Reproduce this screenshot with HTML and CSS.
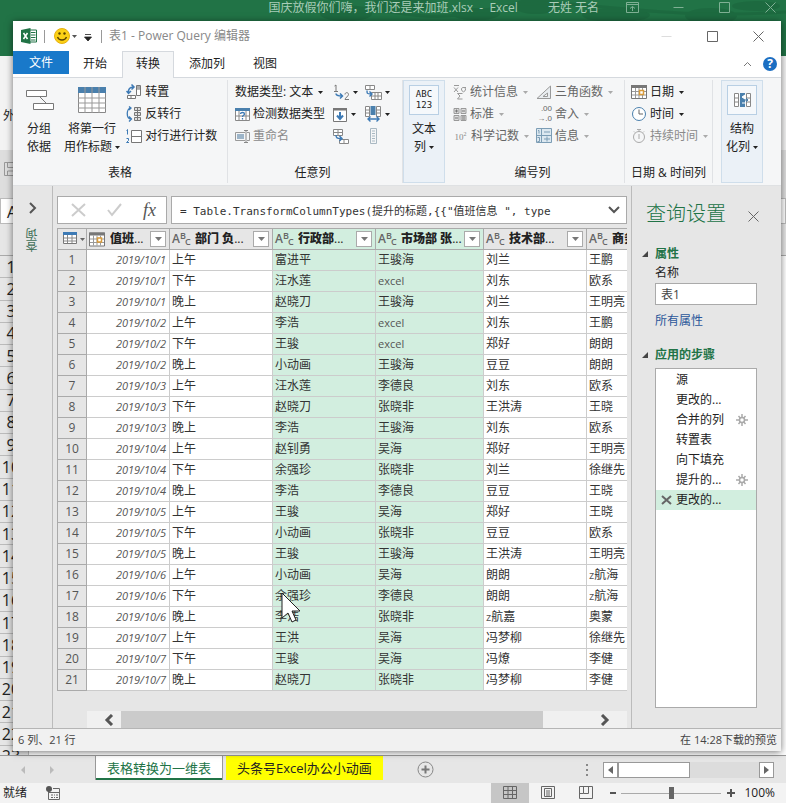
FILE: index.html
```html
<!DOCTYPE html>
<html lang="zh-CN">
<head>
<meta charset="utf-8">
<meta name="viewport" content="width=device-width, initial-scale=1">
<title>表1 - Power Query 编辑器</title>
<link rel="stylesheet" href="styles.css">
</head>
<body>
<svg class="defs" aria-hidden="true">
  <symbol id="cal" viewBox="0 0 16 14"><path d="M.5.5h15v13H.5z" fill="#fff" stroke="#777"/><path d="M0 0h16v3H0z" fill="#777"/><path d="M1 6.500h14M1 10h14M4.500 3v10M8 3v10M11.500 3v10" stroke="#999" fill="none"/><path d="M8.500 5.500h4v4h-4z" fill="#fff" stroke="#d89a3a" stroke-width="1.500"/></symbol>
  <symbol id="grid" viewBox="0 0 16 14"><path d="M.5.5h13v11H.5z" fill="#fff" stroke="#777"/><path d="M0 0h14v3H0z" fill="#3d7ab5"/><path d="M1 6h12M1 9h12M4.500 3v8M9 3v8" stroke="#888" fill="none"/></symbol>
  <symbol id="down" viewBox="0 0 7 4"><path d="M0 0h7L3.500 4z" fill="currentColor"/></symbol>
  <symbol id="gear" viewBox="0 0 12 12"><path d="M6 0v12M0 6h12M2.500 2l7 8M9.500 2l-7 8" stroke="#aaa" stroke-width="1.500"/><circle cx="6" cy="6" r="2.500" fill="#fff" stroke="#aaa" stroke-width="1.500"/></symbol>
  <symbol id="close" viewBox="0 0 11 11"><path d="M.5.5l10 10M10.500.5l-10 10" stroke="currentColor" fill="none"/></symbol>
  <symbol id="max" viewBox="0 0 11 11"><path d="M.5.5h10v10H.5z" stroke="currentColor" fill="none"/></symbol>
  <symbol id="min" viewBox="0 0 11 11"><path d="M.5 5.500h10" stroke="currentColor" fill="none"/></symbol>
  <symbol id="chev" viewBox="0 0 12 8"><path d="M1 1l5 5 5-5" stroke="currentColor" stroke-width="2" fill="none"/></symbol>
</svg>

<div class="excel">
  <header class="excel-title">
    <svg class="leaves" viewBox="0 0 500 56" aria-hidden="true"><g fill="#1b633b"><ellipse cx="60" cy="14" rx="26" ry="7"/><ellipse cx="115" cy="4" rx="30" ry="9"/><ellipse cx="190" cy="14" rx="24" ry="6"/><ellipse cx="250" cy="6" rx="22" ry="8"/><ellipse cx="330" cy="15" rx="34" ry="7"/><ellipse cx="425" cy="16" rx="26" ry="8"/><ellipse cx="470" cy="6" rx="24" ry="5"/></g><path d="M0 10c80-16 120 20 200 0s140 12 300 2" stroke="#1b633b" stroke-width="3" fill="none"/></svg>
    <span class="excel-doc">国庆放假你们嗨，我们还是来加班.xlsx&nbsp; -&nbsp; Excel</span>
    <span class="excel-user">无姓 无名</span>
    <button class="win-btn" aria-label="功能区显示选项"><svg width="13" height="11" viewBox="0 0 13 11"><path d="M.5.5h12v10H.5zM1 2.500h11M6.500 9V4.500M4 6.500l2.500-2 2.500 2" stroke="currentColor" fill="none"/></svg></button>
    <button class="win-btn" aria-label="最小化"><svg width="11" height="11"><use href="#min"/></svg></button>
    <button class="win-btn" aria-label="最大化"><svg width="11" height="11"><use href="#max"/></svg></button>
    <button class="win-btn" aria-label="关闭"><svg width="11" height="11"><use href="#close"/></svg></button>
  </header>
  <div class="excel-ribbon">外</div>
  <div class="excel-quick"><svg width="14" height="14" viewBox="0 0 14 14"><path d="M.5.5h13v13H.5zM3.500.5v5h7v-5M3.500 13V9h7v4" stroke="#999" fill="none"/></svg></div>
  <div class="excel-name">A1</div>
  <div class="excel-colhead"></div>
  <ol class="excel-rows">
    <li>1</li><li>2</li><li>3</li><li>4</li><li>5</li><li>6</li><li>7</li><li>8</li><li>9</li><li>10</li><li>11</li><li>12</li><li>13</li><li>14</li><li>15</li><li>16</li><li>17</li><li>18</li><li>19</li><li>20</li><li>21</li><li>22</li><li>23</li>
  </ol>
  <nav class="sheets">
    <span class="sheet-nav"><svg width="36" height="8" viewBox="0 0 36 8"><path d="M5 0v8L1 4zM30 0v8l4-4z" fill="#bbb"/></svg></span>
    <a class="sheet active" href="#">表格转换为一维表</a>
    <a class="sheet yellow" href="#">头条号Excel办公小动画</a>
    <button class="sheet-add" aria-label="新工作表"><svg width="17" height="17" viewBox="0 0 17 17"><circle cx="8.500" cy="8.500" r="7.500" stroke="#888" fill="none"/><path d="M8.500 4.500v8M4.500 8.500h8" stroke="#777" stroke-width="2"/></svg></button>
    <svg class="dots" width="3" height="12" viewBox="0 0 3 12"><path d="M0 1h2M0 6h2M0 11h2" stroke="#888" stroke-width="2"/></svg>
    <div class="sheet-scroll">
      <button aria-label="向左滚动"><svg width="5" height="8"><path d="M5 0v8L0 4z" fill="#666"/></svg></button>
      <span class="thumb"></span><span class="track"></span>
      <button aria-label="向右滚动"><svg width="5" height="8"><path d="M0 0v8l5-4z" fill="#666"/></svg></button>
    </div>
  </nav>
  <footer class="excel-status">
    <span>就绪</span>
    <svg width="14" height="14" viewBox="0 0 14 14"><path d="M2.500 5v8.500h11v-11H7M3 6.500h10" stroke="#666" fill="none"/><path d="M5 9h2M8 9h1M10 9h2M5 11.500h2M8 11.500h1M10 11.500h2" stroke="#666"/><circle cx="3" cy="3" r="3" fill="#555"/></svg>
    <div class="views">
      <button class="on" aria-label="普通"><svg width="14" height="14" viewBox="0 0 14 14"><path d="M.5.5h13v12H.5zM.5 4.500h13M.5 8.500h13M5 .5v12M9.500.5v12" stroke="#666" fill="none"/></svg></button>
      <button aria-label="页面布局"><svg width="14" height="14" viewBox="0 0 14 14"><path d="M.5.5h13v12H.5zM3.500 2.500h7v8h-7zM5 5h4M5 7h4M5 9h4" stroke="#666" fill="none"/></svg></button>
      <button aria-label="分页预览"><svg width="14" height="14" viewBox="0 0 14 14"><path d="M.5.5h13v12H.5zM4.500.5v7h5v-7M.5 7.500h4" stroke="#666" fill="none"/></svg></button>
    </div>
    <button class="zoom-btn" aria-label="缩小"><svg width="8" height="8"><path d="M1 4h6" stroke="#555" stroke-width="2"/></svg></button>
    <input class="zoom" type="range" min="0" max="100" value="50" aria-label="缩放">
    <button class="zoom-btn" aria-label="放大"><svg width="8" height="8"><path d="M0 4h8M4 0v8" stroke="#555" stroke-width="2"/></svg></button>
    <span class="zoom-val">100%</span>
  </footer>
</div>

<main class="pq">
  <header class="pq-title">
    <svg width="16" height="16" viewBox="0 0 16 16"><path d="M8 2h7.500v12H8z" fill="#fff" stroke="#217346"/><path d="M10 4.500h4.500M10 7h4.500M10 9.500h4.500M10 12h4.500" stroke="#217346"/><path d="M0 2l9.500-2v16L0 14z" fill="#217346"/><path d="M2.500 5l4 6M6.500 5l-4 6" stroke="#fff" stroke-width="1.500"/></svg>
    <i class="bar"></i>
    <button class="smile" aria-label="反馈"><svg width="16" height="16" viewBox="0 0 16 16"><circle cx="8" cy="8" r="7.500" fill="#fcd116" stroke="#e6b010"/><circle cx="5.500" cy="5.500" r="1.200" fill="#5b4300"/><circle cx="10.500" cy="5.500" r="1.200" fill="#5b4300"/><path d="M3.500 9c1.500 4 7.500 4 9 0" stroke="#5b4300" stroke-width="1.300" fill="none"/></svg><svg width="5" height="3"><use href="#down"/></svg></button>
    <button class="custom" aria-label="自定义快速访问工具栏"><svg width="8" height="7" viewBox="0 0 8 7"><path d="M1 .5h6M.5 3h7L4 7z" stroke="#222" stroke-width=".8" fill="#222"/></svg></button>
    <i class="bar"></i>
    <h1>表1 - Power Query 编辑器</h1>
    <button class="win-btn faint" aria-label="最小化"><svg width="11" height="11"><use href="#min"/></svg></button>
    <button class="win-btn" aria-label="最大化"><svg width="11" height="11"><use href="#max"/></svg></button>
    <button class="win-btn" aria-label="关闭"><svg width="11" height="11"><use href="#close"/></svg></button>
  </header>

  <nav class="tabs">
    <a class="tab file" href="#">文件</a>
    <a class="tab" href="#">开始</a>
    <a class="tab on" href="#">转换</a>
    <a class="tab" href="#">添加列</a>
    <a class="tab" href="#">视图</a>
    <button class="collapse" aria-label="折叠功能区"><svg width="9" height="6" viewBox="0 0 9 6"><path d="M1 5l3.500-3.500L8 5" stroke="#777" fill="none"/></svg></button>
    <button class="help" aria-label="帮助">?</button>
  </nav>

  <div class="ribbon">
    <section class="group g-table">
      <div class="tools">
        <button class="big"><svg width="30" height="30" viewBox="0 0 30 30"><path d="M2.500 5.500h20v6h-20zM9.500 18.500h20v6h-20z" fill="#fff" stroke="#777"/><path d="M16 12l6 6" stroke="#777"/></svg><span>分组<br>依据</span></button>
        <button class="big"><svg width="30" height="30" viewBox="0 0 30 30"><path d="M1.500 2.500h27v25h-27z" fill="#fff" stroke="#888"/><path d="M1 2h28v6H1z" fill="#4a80ad"/><path d="M8 2v26M15 2v26M22 2v26M1 13h28M1 18h28M1 23h28" stroke="#999"/></svg><span>将第一行<br>用作标题 <svg width="5" height="3"><use href="#down"/></svg></span></button>
        <div class="stack">
          <button><svg width="16" height="16" viewBox="0 0 16 16"><path d="M10.500 1.500h4v10h-4zM10.500 5h4M1.500 11.500h8v3h-8zM5 11.500v3" fill="#fff" stroke="#777"/><path d="M11 2h3v3h-3z" fill="#aaa"/><path d="M2.500 9C2 5 4 3 7.500 3M5.500.5L8 3 5.500 5.500M.5 7l2 2.500L5 7" stroke="#3d7ab5" stroke-width="1.500" fill="none"/></svg>转置</button>
          <button><svg width="16" height="16" viewBox="0 0 16 16"><path d="M8.500 1.500h6v3h-6zM8.500 6.500h6v3h-6zM8.500 11.500h6v3h-6zM11.500 1v13" fill="#ddd" stroke="#777"/><path d="M5 2C0 2 0 13 5 13M3 10.500L5.500 13 3 15.500M3 .5L5 2 3 4" stroke="#3d7ab5" stroke-width="1.300" fill="none"/></svg>反转行</button>
          <button><svg width="16" height="16" viewBox="0 0 16 16"><path d="M5.500 2.500h10v12h-10zM5.500 8.500h10" fill="#fff" stroke="#777"/><path d="M.5 2.500l1-1v5M.5 10.500h2v2l-2 2h2.500" stroke="#3d7ab5" fill="none"/></svg>对行进行计数</button>
        </div>
      </div>
      <h2>表格</h2>
    </section>

    <section class="group g-any">
      <div class="tools">
        <div class="stack">
          <button>数据类型: 文本<svg class="dd" width="5" height="3"><use href="#down"/></svg></button>
          <button><svg width="15" height="15" viewBox="0 0 15 15"><path d="M.5 1.500h14v12H.5zM.5 9h14M4 4v9M11 4v9" fill="#fff" stroke="#888"/><path d="M0 1h15v3H0z" fill="#4a80ad"/><path d="M5.500 7c0-2 4-2 4 0 0 1.500-2 1-2 3M7.500 11v1.500" stroke="#3d7ab5" stroke-width="1.300" fill="none"/></svg>检测数据类型</button>
          <button class="off"><svg width="15" height="15" viewBox="0 0 15 15"><path d="M10 3.500H.5v8H10M12 3.500h2.500v8H12" fill="none" stroke="#999"/><path d="M2 5h7v5H2z" fill="#9db5c9"/><path d="M9 1.500h4M9 13.500h4M11 2v11" stroke="#888"/></svg>重命名</button>
        </div>
        <div class="stack icons">
          <button aria-label="替换值"><svg width="17" height="16" viewBox="0 0 17 16"><path d="M1.500 2l1.500-1v6M1 7.500h4M12 10.500c0-2.500 3.500-2.500 3.500 0 0 1.500-3.500 3.500-3.500 5h4" stroke="#777" fill="none"/><path d="M3 9.500c0 2 2 2.500 6 2.500M7 9.500L9.500 12 7 14.500" stroke="#3d7ab5" stroke-width="1.500" fill="none"/></svg><svg class="dd" width="5" height="3"><use href="#down"/></svg></button>
          <button aria-label="填充"><svg width="15" height="15" viewBox="0 0 15 15"><path d="M.5 1.500h13v13H.5z" fill="#fff" stroke="#777"/><path d="M0 1h14v2.500H0z" fill="#777"/><path d="M7 5v7M4 8.500L7 12l3-3.500" stroke="#3d7ab5" stroke-width="2" fill="none"/></svg><svg class="dd" width="5" height="3"><use href="#down"/></svg></button>
          <button aria-label="移动"><svg width="17" height="16" viewBox="0 0 17 16"><path d="M.5 1.500h9v6h-9zM.5 4.500h9M5 1v6M6.500 11.500h9v4h-9zM11 11v4" fill="#fff" stroke="#888"/><path d="M3 7c0 3 1 3.500 5 3.500M6.500 8L9 10.500 6.500 13" stroke="#3d7ab5" stroke-width="1.400" fill="none"/></svg></button>
        </div>
        <div class="stack icons">
          <button aria-label="逆透视列"><svg width="17" height="16" viewBox="0 0 17 16"><path d="M.5 1.500h9v4h-9zM5 1v4M6.500 8.500h10v7h-10zM6.500 12h10M10 8v7M13 8v7" fill="#fff" stroke="#888"/><path d="M2 6.500c0 3 0 3.500 4 3.500M4.500 7.500L7 10l-2.500 2.500" stroke="#3d7ab5" stroke-width="1.400" fill="none"/></svg><svg class="dd" width="5" height="3"><use href="#down"/></svg></button>
          <button aria-label="移动列"><svg width="17" height="16" viewBox="0 0 17 16"><path d="M.5.5h4v10h-4zM.5 4h4M.5 7h4M11.500.5h4v10h-4zM11.500 4h4M11.500 7h4" fill="#fff" stroke="#888"/><path d="M5.500 0h5v9h-5z" fill="#4a80ad"/><path d="M3 13h11M5.500 10.500L3 13l2.500 2.500M11.500 10.500L14 13l-2.500 2.500" stroke="#3d7ab5" stroke-width="1.400" fill="none"/></svg><svg class="dd" width="5" height="3"><use href="#down"/></svg></button>
          <button aria-label="转换为列表"><svg width="17" height="16" viewBox="0 0 17 16"><path d="M5.500.5h6v15h-6zM7 3h3M7 5.500h3M7 8h3M7 10.500h3M7 13h3" fill="none" stroke="#a9b8c2"/></svg></button>
        </div>
      </div>
      <h2>任意列</h2>
    </section>

    <button class="tile"><span class="tile-icon">ABC<br>123</span><span>文本<br>列 <svg width="5" height="3"><use href="#down"/></svg></span></button>

    <section class="group g-num">
      <div class="tools">
        <div class="stack dim">
          <button><svg width="14" height="16" viewBox="0 0 14 16"><path d="M1 1.500h5M1 3.500l4 4.500M5 3.500L1 8M13 3.500H9.500a2 2.200 0 1 0 2 0M9.500 9.500h-5l2.500 2.500-2.500 3h5" stroke="#9a9a9a" fill="none"/></svg>统计信息<svg class="dd" width="5" height="3"><use href="#down"/></svg></button>
          <button><svg width="14" height="14" viewBox="0 0 14 14"><path d="M1 1.500h5v5H1zM8 1.500h5v5H8zM1 8.500h5v5H1zM8 8.500h5v5H8z" fill="#ddd" stroke="#999"/><path d="M2 4h3M3.500 2.500v3M9 4h3M2 11h3M9 10h3M9 12h3" stroke="#777"/></svg>标准<svg class="dd" width="5" height="3"><use href="#down"/></svg></button>
          <button><span class="ten">10<sup>2</sup></span>科学记数<svg class="dd" width="5" height="3"><use href="#down"/></svg></button>
        </div>
        <div class="stack dim">
          <button><svg width="16" height="15" viewBox="0 0 16 15"><path d="M1 13.500L14.500 1v12.500zM7 11.500h4.500V8z" fill="#e9edf0" stroke="#999"/></svg>三角函数<svg class="dd" width="5" height="3"><use href="#down"/></svg></button>
          <button><span class="round">.00<br>→.0</span>舍入<svg class="dd" width="5" height="3"><use href="#down"/></svg></button>
          <button><svg width="16" height="16" viewBox="0 0 16 16"><path d="M.5.5h15v14H.5z" fill="#dce8f0" stroke="#7c9db5"/><path d="M.5 7.500h15M5.500 1v14M2 2.500h1v3M1.500 9.500h2v4h-2M8 4h6M8 11h6M11 8.500v5" stroke="#7c9db5" fill="none"/></svg>信息<svg class="dd" width="5" height="3"><use href="#down"/></svg></button>
        </div>
      </div>
      <h2>编号列</h2>
    </section>

    <section class="group g-date">
      <div class="tools">
        <div class="stack">
          <button><svg width="16" height="14"><use href="#cal"/></svg>日期<svg class="dd" width="5" height="3"><use href="#down"/></svg></button>
          <button><svg width="16" height="16" viewBox="0 0 16 16"><circle cx="8" cy="8" r="6.500" fill="#fff" stroke="#4a80ad"/><path d="M8 3.500V8h4" stroke="#666" fill="none"/></svg>时间<svg class="dd" width="5" height="3"><use href="#down"/></svg></button>
          <button class="off"><svg width="16" height="16" viewBox="0 0 16 16"><circle cx="8" cy="9" r="5.500" fill="none" stroke="#aaa"/><path d="M6 1.500h4M8 2v2M8 6v5M3 3.500l1 1M13 3.500l-1 1" stroke="#aaa"/></svg>持续时间<svg class="dd" width="5" height="3"><use href="#down"/></svg></button>
        </div>
      </div>
      <h2>日期 &amp; 时间列</h2>
    </section>

    <button class="tile"><span class="tile-icon"><svg width="17" height="14" viewBox="0 0 17 14"><path d="M.5.5h4v13h-4zM.5 5h4M.5 9h4M12.500.5h4v13h-4zM12.500 5h4M12.500 9h4" fill="#fff" stroke="#888"/><path d="M6 0h5v14H6z" fill="#4a80ad"/><path d="M9 7h5M12 5l2 2-2 2" fill="none" stroke="#4a80ad"/><path d="M8 4l3-2v4zM8 10h3" fill="#fff" stroke="#fff"/></svg></span><span>结构<br>化列 <svg width="5" height="3"><use href="#down"/></svg></span></button>
  </div>

  <div class="work">
    <aside class="queries">
      <button aria-label="展开"><svg width="8" height="12" viewBox="0 0 8 12"><path d="M1 1l5 5-5 5" stroke="#555" stroke-width="2" fill="none"/></svg></button>
      <span>查询</span>
    </aside>

    <section class="center">
      <div class="formula">
        <div class="fx">
          <button aria-label="取消"><svg width="15" height="14" viewBox="0 0 15 14"><path d="M1 1l13 12M14 1L1 13" stroke="#ccc" stroke-width="2"/></svg></button>
          <button aria-label="确认"><svg width="15" height="14" viewBox="0 0 15 14"><path d="M1 7l4 5L14 1" stroke="#ccc" stroke-width="2" fill="none"/></svg></button>
          <button class="f" aria-label="插入函数">fx</button>
        </div>
        <div class="expr">
          <input type="text" aria-label="公式" value="= Table.TransformColumnTypes(提升的标题,{{&quot;值班信息 &quot;, type">
          <button aria-label="展开编辑栏"><svg width="12" height="8"><use href="#chev"/></svg></button>
        </div>
      </div>

      <div class="grid-wrap">
      <table class="grid">
        <colgroup><col class="c-n"><col class="c-d"><col class="c-m"><col class="c-m"><col class="c-l"><col class="c-m"><col class="c-m"></colgroup>
        <thead><tr>
          <th><div class="hd corner"><svg width="16" height="14"><use href="#grid"/></svg><svg width="5" height="3"><use href="#down"/></svg></div></th>
          <th><div class="hd"><svg width="16" height="15"><use href="#cal"/></svg><b>值班<i>...</i></b><button aria-label="筛选"><svg width="7" height="4"><use href="#down"/></svg></button></div></th>
          <th><div class="hd"><span class="abc">A<sup>B</sup><sub>C</sub></span><b>部门 负<i>...</i></b><button aria-label="筛选"><svg width="7" height="4"><use href="#down"/></svg></button></div></th>
          <th class="s"><div class="hd"><span class="abc">A<sup>B</sup><sub>C</sub></span><b>行政部<i>...</i></b><button aria-label="筛选"><svg width="7" height="4"><use href="#down"/></svg></button></div></th>
          <th class="s"><div class="hd"><span class="abc">A<sup>B</sup><sub>C</sub></span><b>市场部 张<i>...</i></b><button aria-label="筛选"><svg width="7" height="4"><use href="#down"/></svg></button></div></th>
          <th><div class="hd"><span class="abc">A<sup>B</sup><sub>C</sub></span><b>技术部<i>...</i></b><button aria-label="筛选"><svg width="7" height="4"><use href="#down"/></svg></button></div></th>
          <th><div class="hd"><span class="abc">A<sup>B</sup><sub>C</sub></span><b>商务</b></div></th>
        </tr></thead>
        <tbody>
          <tr><th>1</th><td>2019/10/1</td><td>上午</td><td>富进平</td><td>王骏海</td><td>刘兰</td><td>王鹏</td></tr>
          <tr><th>2</th><td>2019/10/1</td><td>下午</td><td>汪水莲</td><td><small>excel</small></td><td>刘东</td><td>欧系</td></tr>
          <tr><th>3</th><td>2019/10/1</td><td>晚上</td><td>赵晓刀</td><td>王骏海</td><td>刘兰</td><td>王明亮</td></tr>
          <tr><th>4</th><td>2019/10/2</td><td>上午</td><td>李浩</td><td><small>excel</small></td><td>刘东</td><td>王鹏</td></tr>
          <tr><th>5</th><td>2019/10/2</td><td>下午</td><td>王骏</td><td><small>excel</small></td><td>郑好</td><td>朗朗</td></tr>
          <tr><th>6</th><td>2019/10/2</td><td>晚上</td><td>小动画</td><td>王骏海</td><td>豆豆</td><td>朗朗</td></tr>
          <tr><th>7</th><td>2019/10/3</td><td>上午</td><td>汪水莲</td><td>李德良</td><td>刘东</td><td>欧系</td></tr>
          <tr><th>8</th><td>2019/10/3</td><td>下午</td><td>赵晓刀</td><td>张晓非</td><td>王洪涛</td><td>王晓</td></tr>
          <tr><th>9</th><td>2019/10/3</td><td>晚上</td><td>李浩</td><td>王骏海</td><td>刘东</td><td>欧系</td></tr>
          <tr><th>10</th><td>2019/10/4</td><td>上午</td><td>赵钊勇</td><td>吴海</td><td>郑好</td><td>王明亮</td></tr>
          <tr><th>11</th><td>2019/10/4</td><td>下午</td><td>余强珍</td><td>张晓非</td><td>刘兰</td><td>徐继先</td></tr>
          <tr><th>12</th><td>2019/10/4</td><td>晚上</td><td>李浩</td><td>李德良</td><td>豆豆</td><td>王晓</td></tr>
          <tr><th>13</th><td>2019/10/5</td><td>上午</td><td>王骏</td><td>吴海</td><td>郑好</td><td>王晓</td></tr>
          <tr><th>14</th><td>2019/10/5</td><td>下午</td><td>小动画</td><td>张晓非</td><td>豆豆</td><td>欧系</td></tr>
          <tr><th>15</th><td>2019/10/5</td><td>晚上</td><td>王骏</td><td>王骏海</td><td>王洪涛</td><td>王明亮</td></tr>
          <tr><th>16</th><td>2019/10/6</td><td>上午</td><td>小动画</td><td>吴海</td><td>朗朗</td><td><small>z</small>航海</td></tr>
          <tr><th>17</th><td>2019/10/6</td><td>下午</td><td>余强珍</td><td>李德良</td><td>朗朗</td><td><small>z</small>航海</td></tr>
          <tr><th>18</th><td>2019/10/6</td><td>晚上</td><td>李浩</td><td>张晓非</td><td><small>z</small>航嘉</td><td>奥蒙</td></tr>
          <tr><th>19</th><td>2019/10/7</td><td>上午</td><td>王洪</td><td>吴海</td><td>冯梦柳</td><td>徐继先</td></tr>
          <tr><th>20</th><td>2019/10/7</td><td>下午</td><td>王骏</td><td>吴海</td><td>冯燎</td><td>李健</td></tr>
          <tr><th>21</th><td>2019/10/7</td><td>晚上</td><td>赵晓刀</td><td>张晓非</td><td>冯梦柳</td><td>李健</td></tr>
        </tbody>
      </table>
      </div>
      <div class="hscroll">
        <button aria-label="向左滚动"><svg width="10" height="12" viewBox="0 0 10 12"><path d="M8 1L3 6l5 5" stroke="#555" stroke-width="3" fill="none"/></svg></button>
        <span></span>
        <button class="right" aria-label="向右滚动"><svg width="10" height="12" viewBox="0 0 10 12"><path d="M2 1l5 5-5 5" stroke="#555" stroke-width="3" fill="none"/></svg></button>
      </div>
    </section>

    <aside class="settings">
      <div class="set-head"><h2>查询设置</h2><button aria-label="关闭"><svg width="11" height="11"><use href="#close"/></svg></button></div>
      <h3>属性</h3>
      <label for="qname">名称</label>
      <input id="qname" type="text" value="表1">
      <a href="#">所有属性</a>
      <h3>应用的步骤</h3>
      <ul>
        <li>源</li>
        <li>更改的...</li>
        <li>合并的列<svg class="gear" width="12" height="12"><use href="#gear"/></svg></li>
        <li>转置表</li>
        <li>向下填充</li>
        <li>提升的...<svg class="gear" width="12" height="12"><use href="#gear"/></svg></li>
        <li class="on"><svg width="11" height="10" viewBox="0 0 11 10"><path d="M1 1l9 8M10 1L1 9" stroke="#666" stroke-width="2"/></svg>更改的...</li>
      </ul>
    </aside>
  </div>

  <footer class="pq-status"><span>6 列、21 行</span><span>在 14:28下载的预览</span></footer>
</main>

<svg class="cursor" width="21" height="32" viewBox="0 0 21 32" aria-hidden="true"><path d="M1 1v25l6-5 4 9 4-2-4-9h8z" fill="#fff" stroke="#222"/></svg>
</body>
</html>
```
FILE: styles.css
```css
* { box-sizing: border-box; }

body {
  margin: 0;
  height: 100vh;
  position: relative;
  overflow: hidden;
  font: 12px/18px "Open Sans", "Noto Sans CJK SC", sans-serif;
  color: #222;
}

button {
  font: inherit;
  color: inherit;
  background: none;
  border: 0;
  padding: 0;
  display: flex;
  align-items: center;
  justify-content: center;
  white-space: nowrap;
}

a { color: inherit; text-decoration: none; }
h1, h2, h3 { margin: 0; font-size: 12px; font-weight: 400; }
svg { flex: none; }
.defs { position: absolute; width: 0; height: 0; }

/* Workbook window behind the editor */
.excel { height: 100%; display: flex; flex-direction: column; background: #e6e6e6; }
.excel-title {
  position: relative;
  height: 56px;
  display: flex;
  align-items: flex-start;
  justify-content: flex-end;
  gap: 16px;
  padding-right: 1px;
  line-height: 15px;
  background: #217346;
  color: #a9cdb8;
  white-space: nowrap;
}
.leaves { position: absolute; right: 0; top: 0; width: 500px; height: 56px; opacity: .5; }
.excel-title > span, .excel-title > button { position: relative; }
.excel-user { margin: 0 2px 0 14px; }
.win-btn { width: 30px; height: 15px; }
.excel-title .win-btn { color: #7fb094; }
.excel-ribbon { height: 94px; padding: 51px 3px 0; background: #f3f3f3; }
.excel-quick { height: 48px; padding: 12px 4px; background: #dedede; }
.excel-name { height: 26px; padding: 4px 6px; background: #fff; border: 1px solid #bbb; font-size: 16px; }
.excel-colhead { height: 32px; border-bottom: 1px solid #aaa; }
.excel-rows {
  flex: 1;
  min-height: 0;
  margin: 0;
  padding: 0;
  overflow: hidden;
  list-style: none;
  font-size: 16px;
  background: #fff;
}
.excel-rows li {
  width: 29px;
  height: 4.46%;
  padding-right: 6px;
  display: flex;
  align-items: center;
  justify-content: center;
  background: #e6e6e6;
  border: solid #bbb;
  border-width: 0 1px 1px 0;
}
.sheets { height: 28px; display: flex; align-items: center; border-top: 1px solid #999; background: #e6e6e6; }
.sheet-nav { width: 95px; display: flex; padding-left: 20px; }
.sheet { align-self: flex-start; height: 24px; padding: 0 11px; font-size: 13px; line-height: 24px; white-space: nowrap; }
.sheet.active { background: #fff; color: #217346; border: solid #999; border-width: 0 1px; box-shadow: inset 0 -2px #217346; margin-right: 3px; }
.sheet.yellow { background: #ff0; }
.sheet-add { margin-left: 34px; }
.dots { margin-left: auto; }
.sheet-scroll { width: 171px; height: 16px; display: flex; margin: 0 12px 0 14px; background: #dcdcdc; }
.sheet-scroll button, .thumb { background: #fff; border: 1px solid #999; width: 15px; }
.sheet-scroll .thumb { width: 72px; }
.track { flex: 1; }
.excel-status { height: 20px; display: flex; align-items: center; padding: 0 11px 0 3px; background: #f3f3f3; }
.excel-status > span:first-child { margin-right: 19px; }
.views { display: flex; height: 20px; margin-left: auto; margin-right: 4px; }
.views button { width: 38px; }
.views .on { background: #c6c6c6; }
.zoom-btn { width: 8px; }
.zoom { appearance: none; width: 100px; height: 12px; margin: 0 6px 0 4px; background: linear-gradient(#aaa, #aaa) center / 100% 1px no-repeat; }
.zoom::-webkit-slider-thumb { appearance: none; width: 5px; height: 12px; background: #666; }
.zoom-val { margin-left: 9px; }

/* Editor window floating over the workbook */
.pq {
  position: absolute;
  inset: 21px 5px 52px 13px;
  display: flex;
  flex-direction: column;
  background: #e6e6e6;
  box-shadow: 0 1px 7px rgba(0, 0, 0, .55);
}
.pq-title { height: 30px; display: flex; align-items: center; padding: 0 8px; background: #fff; color: #555; }
.pq-title .bar { width: 1px; height: 13px; background: #999; margin: 0 9px 0 7px; }
.smile { gap: 2px; }
.custom { margin: 2px 2px 0 7px; }
.pq-title h1 { flex: 1; color: #888; }
.pq-title .bar + h1 { margin-left: -2px; }
.pq-title .win-btn { margin-left: 16px; color: #666; }
.pq-title .win-btn.faint { color: #ddd; }

.tabs { height: 27px; display: flex; align-items: stretch; background: #fff; border-bottom: 1px solid #d5d9de; }
.tab { padding: 0 13px; line-height: 24px; border: 1px solid transparent; border-bottom: 0; }
.tab.file { height: 23px; padding: 0 15px; line-height: 22px; color: #fff; background: #1979ca; }
.tab.on { margin: 0 1px -1px; background: #f5f6f7; border-color: #d5d9de; }
.collapse { margin-left: auto; }
.help { width: 14px; height: 14px; margin: 6px 4px 0 11px; border-radius: 50%; background: #1b6ec2; color: #fff; font-weight: 700; }

.ribbon { height: 108px; display: flex; padding: 2px 0; background: #f5f6f7; border-bottom: 1px solid #dfe1e3; }
.group { display: flex; flex-direction: column; border-right: 1px solid #e0e2e5; }
.group h2 { margin-top: auto; height: 19px; text-align: center; }
.tools { display: flex; padding-top: 1px; }
.g-table { width: 215px; padding-left: 11px; }
.g-table h2 { margin-left: -11px; }
.g-any { width: 175px; padding-left: 7px; }
.g-any h2, .g-num h2 { margin-left: -8px; padding-right: 4px; }
.g-num { width: 180px; padding-left: 8px; }
.g-date { width: 88px; padding-left: 6px; }
.g-date h2 { text-align: left; white-space: nowrap; }
.big { flex-direction: column; justify-content: flex-start; padding-top: 4px; }
.big span { margin-top: 5px; }
.big svg + span svg, .tile span svg { vertical-align: middle; }
.big + .big { margin-left: 10px; }
.stack { display: flex; flex-direction: column; }
.stack button { height: 22px; gap: 3px; justify-content: flex-start; }
.big + .stack { margin-left: 6px; }
.dd { margin-left: 2px; }
.off { color: #8a8a8a; }
.dim { color: #666; width: 83px; }
.dim .dd, .off .dd { color: #aaa; }
.g-any .stack:first-child { width: 98px; }
.icons { width: 32px; }
.icons button { gap: 1px; }
.ten { width: 15px; font: 9px "Liberation Serif", serif; color: #888; }
.ten sup { font-size: 6px; }
.round { width: 16px; font: 8px/10px "Liberation Sans", sans-serif; text-align: right; }
.tile {
  width: 42px;
  flex-direction: column;
  justify-content: flex-start;
  padding-top: 4px;
  background: #ebf1f7;
  border: 1px solid #cfdeeb;
}
.tile-icon { width: 30px; height: 30px; margin-bottom: 5px; display: grid; place-items: center; border: 1px solid #b8cfe4; font: 9px/11px "DejaVu Sans Mono", monospace; background: #f5f8fb; }
.group + .tile:last-child { margin-left: 8px; }

.work { flex: 1; min-height: 0; display: flex; border-bottom: 1px solid #b5b5b5; }
.queries { width: 40px; padding-top: 16px; display: flex; flex-direction: column; align-items: center; gap: 14px; border-right: 1px solid #bbb; color: #3f6f58; }
.queries span { writing-mode: vertical-rl; transform: rotate(180deg); }
.center { flex: 1; min-width: 0; padding: 10px 4px 0; display: flex; flex-direction: column; }
.formula { display: flex; gap: 4px; height: 28px; margin-bottom: 4px; }
.fx, .expr { display: flex; background: #fff; border: 1px solid #aaa; }
.fx { width: 110px; justify-content: space-between; padding: 0 10px 0 13px; }
.fx .f { font: italic 18px "Liberation Serif", serif; color: #555; }
.expr { flex: 1; min-width: 0; padding: 0 6px 0 8px; }
.expr input { flex: 1; min-width: 0; border: 0; padding: 0; background: none; color: #333; font: 11px "DejaVu Sans Mono", "Noto Sans CJK SC", monospace; }
.expr button { color: #555; }

.grid-wrap { overflow: hidden; }
.grid { width: 632px; table-layout: fixed; border-collapse: separate; border-spacing: 0; border-left: 1px solid #aaa; }
.c-n { width: 29px; }
.c-d { width: 83px; }
.c-m { width: 103px; }
.c-l { width: 108px; }
.grid th, .grid td { height: 21px; padding: 0 3px 0 2px; line-height: 20px; text-align: left; white-space: nowrap; overflow: hidden; border: solid #ccc; border-width: 0 1px 1px 0; }
.grid td { background: #fff; color: #333; }
.grid thead th { height: 22px; padding: 0; border-color: #aaa; border-top: 1px solid #aaa; background: #e6e6e6; }
.grid tbody th { padding: 0; text-align: center; font-weight: 400; color: #555; background: #e6e6e6; border-color: #aaa; }
.grid td:nth-child(2) { text-align: right; font-style: italic; color: #555; font-size: 11px; }
.grid td:nth-child(4), .grid td:nth-child(5), .grid thead .s { background: #d2eedf; }
.grid small { font-size: 11px; color: #555; }
.hd { height: 20px; display: flex; align-items: center; padding: 0 3px 0 2px; }
.hd b { flex: 1; min-width: 0; margin-left: 5px; overflow: hidden; }
.hd i { font-style: normal; font-weight: 400; }
.abc { width: 18px; flex: none; display: flex; align-items: center; font-size: 12px; font-weight: 600; line-height: 12px; color: #666; }
.abc sup, .abc sub { font-size: 9px; line-height: 10px; }
.abc sup { padding-bottom: 6px; }
.abc sub { padding-top: 6px; margin-left: -1px; }
.hd.corner { padding: 0 3px 0 5px; gap: 1px; color: #666; }
.hd button { width: 16px; height: 16px; color: #777; background: #fff; border: 1px solid #aaa; }
.hscroll { height: 17px; margin: auto 0 0 30px; display: flex; background: #f0f0f0; }
.hscroll button { width: 34px; padding-left: 10px; }
.hscroll span { flex: 1; background: #cbcbcb; }
.hscroll .right { width: 84px; padding-left: 40px; }

.settings { width: 150px; padding: 16px 24px 20px 23px; display: flex; flex-direction: column; border-left: 1px solid #bbb; }
.set-head { display: flex; justify-content: space-between; margin: 0 -2px 0 -9px; height: 24px; line-height: 24px; }
.set-head h2 { font-size: 20px; color: #217346; font-weight: 300; white-space: nowrap; }
.set-head button { color: #666; padding-top: 4px; }
.settings h3 { position: relative; margin-top: 18px; height: 20px; line-height: 20px; font-weight: 700; color: #217346; }
.settings h3::before { content: ""; position: absolute; left: -13px; top: 7px; border: solid transparent; border-width: 0 0 6px 6px; border-bottom-color: #444; }
.settings input { width: 100%; height: 22px; margin: 1px 0 7px; padding: 0 5px; border: 1px solid #aaa; background: #fff; font: inherit; color: #444; }
.settings a { color: #2b579a; }
.settings a + h3 { margin-top: 15px; }
.settings ul { flex: 1; min-height: 0; margin: 3px 0 0; padding: 1px 0; list-style: none; background: #fff; border: 1px solid #aaa; }
.settings li { height: 20px; line-height: 20px; padding: 0 8px 0 20px; display: flex; align-items: center; white-space: nowrap; }
.settings li.on { padding-left: 5px; gap: 4px; background: #d2eedf; }
.gear { margin-left: auto; }

.pq-status { height: 22px; display: flex; justify-content: space-between; align-items: center; padding: 0 4px 0 5px; background: #f1f1f1; color: #444; font-size: 11px; }

.cursor { position: absolute; left: 281px; top: 592px; }
```
